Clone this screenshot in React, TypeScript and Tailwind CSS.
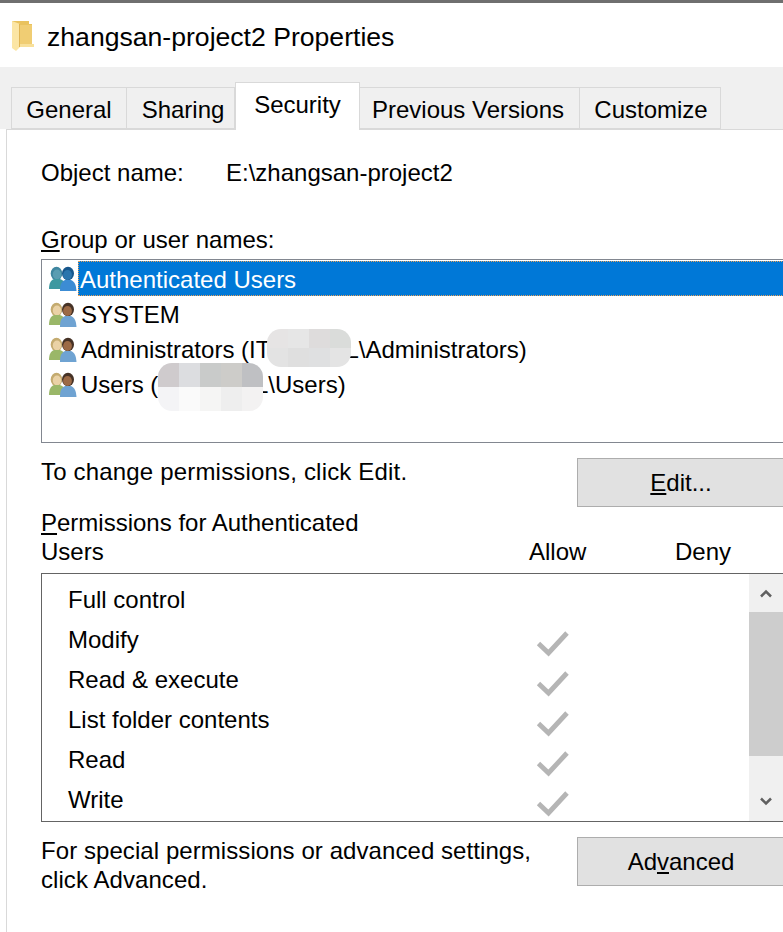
const font = "font-['Liberation_Sans',Arial,sans-serif]";

const tabs = [
	{ label: 'General', className: 'w-[116px]' },
	{ label: 'Sharing', className: 'w-[108px] pl-[5px]' },
	{ label: 'Security', className: 'w-[125px]', active: true },
	{ label: 'Previous Versions', className: 'w-[220px] pr-[3px]' },
	{ label: 'Customize', className: 'w-[141px] pl-[2px]' },
];

const permissions = [
	{ name: 'Full control', allow: false },
	{ name: 'Modify', allow: true },
	{ name: 'Read & execute', allow: true },
	{ name: 'List folder contents', allow: true },
	{ name: 'Read', allow: true },
	{ name: 'Write', allow: true },
];

const patchA = ['#e6e4e4', '#e6e6e6', '#dedcdc', '#dadcda', '#e3e3e3', '#dfdfdf', '#dfe0e1', '#e4e4e4'];
const patchB = [
	'#cfcbcd', '#dcdde0', '#c9cbca', '#cdccc9', '#bfc0c3',
	'#f4f4f6', '#fafafa', '#f5f5f4', '#eeeeee', '#f3f2f2',
];

function Folder() {
	return (
		<svg width="22" height="31" viewBox="0 0 22 31" className="shrink-0">
			<path d="M0 1h17v3h3v23H0z" fill="#e9c25e" />
			<path d="M7 5h13v21H7z" fill="#f0cd73" />
			<path d="M7 24h15v3H7z" fill="#f8e09a" />
			<path d="M0 1l8 3v23l-4 4-4-3z" fill="#fbe5a4" />
			<path d="M7 4h1v23H7z" fill="#e0b555" />
		</svg>
	);
}

function Users({ blue }: { blue?: boolean }) {
	const backHair = blue ? '#3f86a0' : '#c4ab70';
	const backFace = blue ? '#5a9db2' : '#ead2a6';
	const backBody = blue ? '#3d98a0' : '#9ab768';
	const frontHair = blue ? '#17578c' : '#463226';
	const frontFace = blue ? '#2a75ad' : '#9c6a46';
	const frontBody = blue ? '#3c8cd4' : '#6fa3d2';
	return (
		<svg width="30" height="26" viewBox="0 0 30 26" className="shrink-0">
			<ellipse cx="8.5" cy="7.5" rx="5.8" ry="6.8" fill={backHair} />
			<ellipse cx="9" cy="8.5" rx="4.2" ry="5" fill={backFace} />
			<path d="M1 23c0-6 2-9 5-10h6c3 1 5 3 6 6v4z" fill={backBody} />
			<ellipse cx="20" cy="7.5" rx="6" ry="6.8" fill={frontHair} />
			<ellipse cx="19.5" cy="9" rx="4.4" ry="5" fill={frontFace} />
			<path d="M12 25c0-6 1-9 5-11h6c4 2 5 5 5.500 11z" fill={frontBody} />
		</svg>
	);
}

function Check() {
	return (
		<svg width="34" height="28" viewBox="0 0 34 28" className="mt-[6px] shrink-0">
			<path d="M2.5 14.500 12.500 24 31 4" fill="none" stroke="#b5b5b5" strokeWidth="4.800" />
		</svg>
	);
}

function Mosaic({ colors, cols, className }: { colors: string[]; cols: string; className: string }) {
	return (
		<div className={`absolute grid overflow-hidden rounded-[14px] ${cols} ${className}`}>
			{colors.map((color, index) => (
				<div key={index} style={{ backgroundColor: color }} />
			))}
		</div>
	);
}

function Button({ children }: { children: React.ReactNode }) {
	return (
		<div className="flex h-[49px] w-[208px] shrink-0 items-center justify-center border border-[#adadad] bg-[#e1e1e1]">
			{children}
		</div>
	);
}

export default function App() {
	return (
		<div className={`${font} h-[932px] w-[783px] overflow-hidden bg-white text-[24px] leading-[28px] text-black`}>
			<div className="h-[3px] bg-[#6f6f6f]" />
			<header className="flex h-[64px] items-center gap-[13px] pl-[12px]">
				<Folder />
				<span className="pt-[3px] text-[26.6px]">zhangsan-project2 Properties</span>
			</header>

			<div className="flex h-[62px] items-end bg-[#f0f0f0] pl-[11px]">
				{tabs.map((tab) =>
					tab.active ? (
						<div
							key={tab.label}
							className={`${tab.className} relative z-10 -mb-px flex h-[48px] items-center justify-center border border-b-0 border-[#d9d9d9] bg-white pb-[3px]`}
						>
							{tab.label}
						</div>
					) : (
						<div
							key={tab.label}
							className={`${tab.className} flex h-[42px] items-center justify-center border border-l-0 first:border-l border-[#d9d9d9] pt-[3px]`}
						>
							{tab.label}
						</div>
					),
				)}
			</div>

			<main className="ml-[6px] h-[803px] border-t border-l border-[#d9d9d9] pl-[34px]">
				<div className="mt-[29px] flex">
					<span className="w-[186px]">Object name:</span>
					<span className="-ml-[1px]">E:\zhangsan-project2</span>
				</div>

				<div className="mt-[39px]">
					<span className="underline">G</span>roup or user names:
				</div>

				<div className="relative mt-[5px] h-[184px] w-[760px] border border-[#828790] pt-[1px] pl-[6px]">
					<div className="flex h-[35px] items-center">
						<Users blue />
						<span className="flex h-[35px] flex-1 items-center border border-dotted border-[#e8a15a] bg-[#0078d7] pt-[2px] pl-[1px] text-white">
							Authenticated Users
						</span>
					</div>
					<div className="flex h-[35px] items-center gap-[3px] pt-[2px]">
						<Users />
						SYSTEM
					</div>
					<div className="flex h-[35px] items-center gap-[3px] pt-[2px]">
						<Users />
						<span>
							Administrators (IT<span className="inline-block w-[75px]" />L\Administrators)
						</span>
					</div>
					<div className="flex h-[35px] items-center gap-[3px] pt-[2px]">
						<Users />
						<span>
							Users (I<span className="inline-block w-[90px]" />L\Users)
						</span>
					</div>
					<Mosaic colors={patchA} cols="grid-cols-4" className="top-[69px] left-[225px] h-[38px] w-[84px]" />
					<Mosaic colors={patchB} cols="grid-cols-5" className="top-[103px] left-[116px] h-[48px] w-[105px]" />
				</div>

				<div className="mt-[15px] flex items-start justify-between">
					<span className="tracking-[0.18px]">To change permissions, click Edit.</span>
					<div className="-mr-[2px]">
						<Button>
							<span>
								<span className="underline">E</span>dit...
							</span>
						</Button>
					</div>
				</div>

				<div className="mt-[8px] flex h-[51px] items-end">
					<div className="w-[488px]">
						<div className="leading-[29px]">
							<span className="underline">P</span>ermissions for Authenticated
						</div>
						<div className="leading-[29px]">Users</div>
					</div>
					<span className="w-[146px] leading-[29px]">Allow</span>
					<span className="leading-[29px]">Deny</span>
				</div>

				<div className="mt-[7px] flex h-[249px] w-[760px] overflow-hidden border border-[#646464]">
					<div className="w-[707px] pt-[6px] pl-[26px]">
						{permissions.map((permission) => (
							<div key={permission.name} className="flex h-[40px] items-center">
								<span className="w-[468px]">{permission.name}</span>
								{permission.allow && <Check />}
							</div>
						))}
					</div>
					<div className="flex w-[34px] flex-col bg-[#f0f0f0]">
						<div className="flex h-[38px] items-center justify-center">
							<svg width="12" height="9" viewBox="0 0 12 9">
								<path d="M1 7.500 6 2.500l5 5" fill="none" stroke="#606060" strokeWidth="2.500" />
							</svg>
						</div>
						<div className="h-[144px] bg-[#cdcdcd]" />
						<div className="flex flex-1 items-center justify-center pt-[26px]">
							<svg width="12" height="9" viewBox="0 0 12 9">
								<path d="M1 1.500 6 6.500l5-5" fill="none" stroke="#606060" strokeWidth="2.500" />
							</svg>
						</div>
					</div>
				</div>

				<div className="mt-[15px] flex items-start justify-between">
					<div className="-mt-px leading-[29px] tracking-[0.07px]">
						For special permissions or advanced settings,
						<br />
						click Advanced.
					</div>
					<div className="-mr-[2px]">
						<Button>
							<span>
								Ad<span className="underline">v</span>anced
							</span>
						</Button>
					</div>
				</div>
			</main>
		</div>
	);
}
